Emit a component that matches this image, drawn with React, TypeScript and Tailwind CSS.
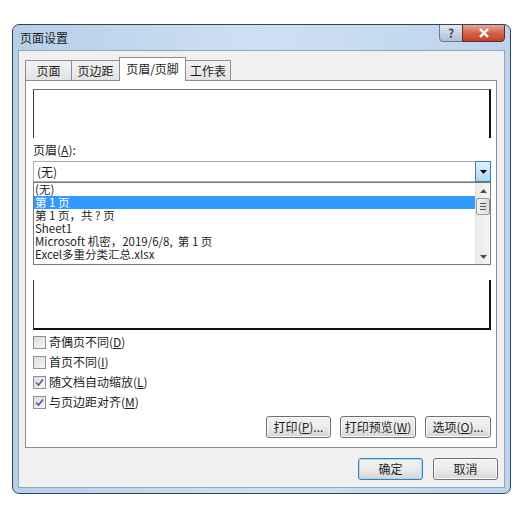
import React from 'react';

const FONT = { fontFamily: '"Noto Sans CJK SC", "Liberation Sans", sans-serif' };

// Underlined access key, e.g. 页眉(A)
const Key = ({ k }: { k: string }) => (
  <>
    (<span className="underline underline-offset-1">{k}</span>)
  </>
);

function Tab({ label, active, w }: { label: string; active?: boolean; w: number }) {
  if (active) {
    return (
      <div
        className="relative z-10 -mb-px flex h-[24px] items-center justify-center border border-b-0 border-[#898c95] bg-white pb-[2px] text-[12px] text-[#1e1e1e]"
        style={{ width: w }}
      >
        {label}
      </div>
    );
  }
  return (
    <div
      className="flex h-[20px] items-center justify-center border border-b-0 border-[#898c95] bg-gradient-to-b from-[#f2f2f2] to-[#e3e3e3] text-[12px] text-[#1e1e1e]"
      style={{ width: w }}
    >
      {label}
    </div>
  );
}

function CheckRow({ label, k, checked }: { label: string; k: string; checked?: boolean }) {
  return (
    <div className="flex h-[20px] items-center gap-[3px] text-[12px] text-[#1e1e1e]">
      <div className="flex h-[13px] w-[13px] items-center justify-center border border-[#8e8f8f] bg-gradient-to-br from-[#dcdcdc] to-[#f6f6f6]">
        {checked && (
          <svg width="9" height="9" viewBox="0 0 9 9">
            <path d="M1 4.5 L3.5 7 L8 1.5" fill="none" stroke="#4a5f97" strokeWidth="1.6" />
          </svg>
        )}
      </div>
      <span>
        {label}
        <Key k={k} />
      </span>
    </div>
  );
}

function Btn({ children, w, primary }: { children: React.ReactNode; w: number; primary?: boolean }) {
  return (
    <button
      className={
        'flex h-[22px] items-center justify-center rounded-[3px] border bg-gradient-to-b from-[#f2f2f2] via-[#ebebeb] to-[#d6d6d6] text-[12px] text-[#1e1e1e] ' +
        (primary ? 'border-[#3c7fb1] shadow-[inset_0_0_0_1px_#a6d8f6]' : 'border-[#707070] shadow-[inset_0_0_0_1px_#fafafa]')
      }
      style={{ width: w }}
    >
      {children}
    </button>
  );
}

const items = [
  '(无)',
  '第 1 页',
  '第 1 页，共 ? 页',
  'Sheet1',
  'Microsoft 机密，2019/6/8,  第 1 页',
  'Excel多重分类汇总.xlsx',
];

export default function App() {
  return (
    <div className="h-[521px] w-[524px] bg-white pt-[24px] pl-[12px]" style={FONT}>
      {/* window */}
      <div className="h-[470px] w-[499px] overflow-hidden rounded-[7px] border border-[#344255] bg-gradient-to-r from-[#b6cfe9] via-[#cfe0f2] to-[#bcd4ec]">
        {/* title bar */}
        <div className="flex h-[25px] items-start justify-between pl-[7px] pr-[5px]">
          <div className="pt-[4px] text-[12px] text-[#1b1b1b]">页面设置</div>
          <div className="-mt-px flex">
            <div className="flex h-[18px] w-[24px] items-center justify-center rounded-bl-[4px] border border-[#6c7a8c] bg-gradient-to-b from-[#e4ebf2] to-[#aebfd1] text-[12px] font-bold leading-none text-[#3e4a5a]">
              ?
            </div>
            <div className="-ml-px flex h-[18px] w-[43px] items-center justify-center rounded-br-[4px] border border-[#5a2a24] bg-gradient-to-b from-[#e8a594] via-[#d4634f] to-[#c3412c]">
              <svg width="12" height="10" viewBox="0 0 12 10">
                <path d="M2 1 L10 9 M10 1 L2 9" stroke="#ffffff" strokeWidth="2.4" />
              </svg>
            </div>
          </div>
        </div>

        {/* client area */}
        <div className="mx-[5px] h-[438px] border border-[#8fa6c2] bg-[#f0f0f0] pl-[6px] pt-[6px] pr-[6px]">
          {/* tabs */}
          <div className="flex h-[23px] items-end">
            <Tab label="页面" w={47} />
            <div className="-ml-px">
              <Tab label="页边距" w={49} />
            </div>
            <div className="-ml-px">
              <Tab label="页眉/页脚" w={67} active />
            </div>
            <div className="-ml-px">
              <Tab label="工作表" w={46} />
            </div>
          </div>

          {/* tab panel */}
          <div className="h-[368px] w-[472px] border border-[#898c95] bg-white pl-[7px] pr-[5px] pt-[8px]">
            {/* header preview */}
            <div className="h-[49px] w-[458px] border-x border-t border-x-[#3a3a3a] border-t-[#6e6e6e] border-r-2 border-r-[#111]" />

            <div className="mt-[4px] h-[16px] text-[12px] leading-[16px] text-[#1e1e1e]">
              页眉<Key k="A" />:
            </div>

            {/* combobox */}
            <div className="mt-[3px] flex h-[21px] w-[458px] border border-[#abadb3] bg-white">
              <div className="flex-1 pl-[3px] text-[12px] leading-[19px] text-[#1e1e1e]">(无)</div>
              <div className="-my-px -mr-px flex w-[16px] items-center justify-center border border-[#3c7fb1] bg-gradient-to-b from-[#e3f3fd] to-[#a9d6f5]">
                <svg width="7" height="4" viewBox="0 0 7 4">
                  <path d="M0 0 L7 0 L3.5 4 Z" fill="#000" />
                </svg>
              </div>
            </div>

            {/* dropped list */}
            <div className="flex h-[83px] w-[458px] border border-[#7a7a7a] bg-white">
              <div className="flex-1 text-[11.5px] leading-[13px] text-[#1e1e1e]">
                {items.map((t, i) => (
                  <div
                    key={i}
                    className={'h-[13px] whitespace-pre pl-[1px] ' + (i === 1 ? 'bg-[#3399ff] text-white' : '')}
                  >
                    {t}
                  </div>
                ))}
              </div>
              <div className="flex w-[15px] flex-col items-center border-l border-[#e3e3e3] bg-gradient-to-r from-[#eaeaea] to-[#f4f4f4]">
                <div className="flex h-[15px] items-center justify-center">
                  <svg width="7" height="4" viewBox="0 0 7 4">
                    <path d="M0 4 L7 4 L3.5 0 Z" fill="#4d4d4d" />
                  </svg>
                </div>
                <div className="flex h-[17px] w-[14px] flex-col items-center justify-center gap-[2px] rounded-[2px] border border-[#9a9a9a] bg-gradient-to-r from-[#f3f3f3] to-[#dadada]">
                  <div className="h-px w-[6px] bg-[#555]" />
                  <div className="h-px w-[6px] bg-[#555]" />
                  <div className="h-px w-[6px] bg-[#555]" />
                </div>
                <div className="flex-1" />
                <div className="flex h-[15px] items-center justify-center">
                  <svg width="7" height="4" viewBox="0 0 7 4">
                    <path d="M0 0 L7 0 L3.5 4 Z" fill="#4d4d4d" />
                  </svg>
                </div>
              </div>
            </div>

            {/* footer preview */}
            <div className="mt-[15px] h-[50px] w-[458px] border-x border-b-2 border-x-[#3a3a3a] border-b-[#111] border-r-2 border-r-[#111]" />

            <div className="mt-[2px]">
              <CheckRow label="奇偶页不同" k="D" />
              <CheckRow label="首页不同" k="I" />
              <CheckRow label="随文档自动缩放" k="L" checked />
              <CheckRow label="与页边距对齐" k="M" checked />
            </div>

            <div className="mt-[4px] flex w-[458px] justify-end gap-[9px]">
              <Btn w={65}>
                打印<Key k="P" />...
              </Btn>
              <Btn w={76}>
                打印预览<Key k="W" />
              </Btn>
              <Btn w={66}>
                选项<Key k="O" />...
              </Btn>
            </div>
          </div>

          {/* OK / Cancel */}
          <div className="mt-[10px] flex w-[473px] justify-end gap-[10px]">
            <Btn w={65} primary>
              确定
            </Btn>
            <Btn w={65}>取消</Btn>
          </div>
        </div>
      </div>
    </div>
  );
}
